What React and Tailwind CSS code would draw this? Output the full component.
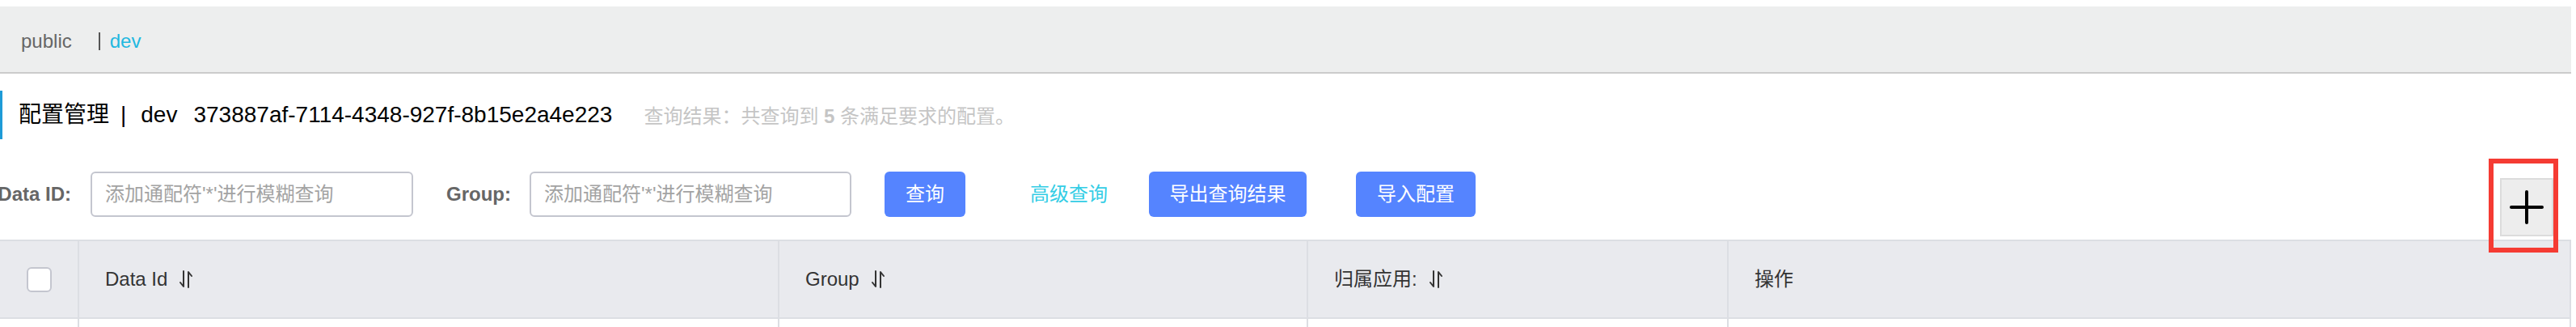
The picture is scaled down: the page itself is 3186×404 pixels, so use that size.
import React from "react";

function SortIcon() {
  return (
    <svg width="20" height="24" viewBox="0 0 20 24" className="ml-[13px] shrink-0" fill="none" stroke="#333" strokeWidth="2" strokeLinecap="round" strokeLinejoin="round">
      <path d="M7 2 V21 L3 16" />
      <path d="M13 22 V3 L17 8" />
    </svg>
  );
}

function HeadCell({ children, sort = true }) {
  return (
    <div className="flex items-center border-l-2 border-[#dcdee3] pl-[32px] text-[24px] text-[#333]">
      <span>{children}</span>
      {sort && <SortIcon />}
    </div>
  );
}

export default function App() {
  return (
    <div className="w-[3186px] h-[404px] overflow-hidden bg-white pt-[8px] pr-[6px] font-['Liberation_Sans','Noto_Sans_CJK_SC',sans-serif]">
      {/* namespace bar */}
      <div className="h-[83px] bg-[#edeeee] border-b-2 border-[#cccccc] flex items-center pl-[26px] pt-[4px] text-[24px]">
        <span className="text-[#666]">public</span>
        <span className="ml-[33px] border-l-2 border-[#555] pl-[12px] leading-[22px] text-[#1fb8e0]">dev</span>
      </div>

      {/* title */}
      <div className="mt-[21px] h-[60px] flex items-center border-l-[3px] border-[#1e9bd7] pl-[20px]">
        <span className="text-[28px] text-black">配置管理</span>
        <span className="text-[28px] text-black ml-[14px] mr-[18px]">|</span>
        <span className="text-[28px] text-black">dev</span>
        <span className="text-[28px] text-black ml-[20px]">373887af-7114-4348-927f-8b15e2a4e223</span>
        <span className="ml-[39px] mt-[4px] text-[24px] text-[#c5c5c5]">
          查询结果：共查询到 <b className="font-bold">5</b> 条满足要求的配置。
        </span>
      </div>

      {/* search row */}
      <div className="mt-[40px] flex items-start">
        <div className="flex items-center h-[56px] text-[24px]">
          <div className="w-[88px] shrink-0 flex justify-end">
            <span className="whitespace-nowrap font-bold text-[#666]">Data ID:</span>
          </div>
          <input
            className="ml-[24px] w-[399px] h-[56px] border-2 border-[#c4c6cf] rounded-[6px] pl-[16px] text-[24px] outline-none placeholder:text-[#a3a3a3]"
            placeholder="添加通配符'*'进行模糊查询"
          />
          <span className="ml-[41px] whitespace-nowrap font-bold text-[#666]">Group:</span>
          <input
            className="ml-[23px] w-[398px] h-[56px] border-2 border-[#c4c6cf] rounded-[6px] pl-[16px] text-[24px] outline-none placeholder:text-[#a3a3a3]"
            placeholder="添加通配符'*'进行模糊查询"
          />
          <button className="ml-[41px] w-[100px] h-[56px] rounded-[6px] bg-[#5584ff] text-white text-[24px]">查询</button>
          <span className="ml-[80px] text-[#33cde5]">高级查询</span>
          <button className="ml-[51px] w-[195px] h-[56px] rounded-[6px] bg-[#5584ff] text-white text-[24px]">导出查询结果</button>
          <button className="ml-[61px] w-[148px] h-[56px] rounded-[6px] bg-[#5584ff] text-white text-[24px]">导入配置</button>
        </div>
        <div className="relative ml-auto mr-[22px] mt-[8px] w-[66px] h-[72px] border-2 border-[#dcdcdc] bg-[#ededed] flex items-center justify-center">
          <svg width="42" height="42" viewBox="0 0 42 42" stroke="#000" strokeWidth="4" strokeLinecap="round">
            <path d="M21 2 V40" />
            <path d="M2 21 H40" />
          </svg>
          <div className="absolute left-[-16px] top-[-26px] w-[86px] h-[116px] border-[6px] border-[#f53b33] z-10" />
        </div>
      </div>

      {/* table */}
      <div className="mt-[4px] border-r-2 border-[#dcdee3]">
        <div className="grid grid-cols-[96px_866px_654px_520px_1fr] h-[98px] bg-[#e9eaee] border-t-2 border-b-2 border-[#dcdee3]">
          <div className="flex items-center justify-center">
            <div className="w-[31px] h-[31px] rounded-[6px] border-2 border-[#c4c6cf] bg-white" />
          </div>
          <HeadCell>Data Id</HeadCell>
          <HeadCell>Group</HeadCell>
          <HeadCell>归属应用:</HeadCell>
          <HeadCell sort={false}>操作</HeadCell>
        </div>
        <div className="grid grid-cols-[96px_866px_654px_520px_1fr] h-[40px]">
          <div />
          <div className="border-l-2 border-[#dcdee3]" />
          <div className="border-l-2 border-[#dcdee3]" />
          <div className="border-l-2 border-[#dcdee3]" />
          <div className="border-l-2 border-[#dcdee3]" />
        </div>
      </div>
    </div>
  );
}
